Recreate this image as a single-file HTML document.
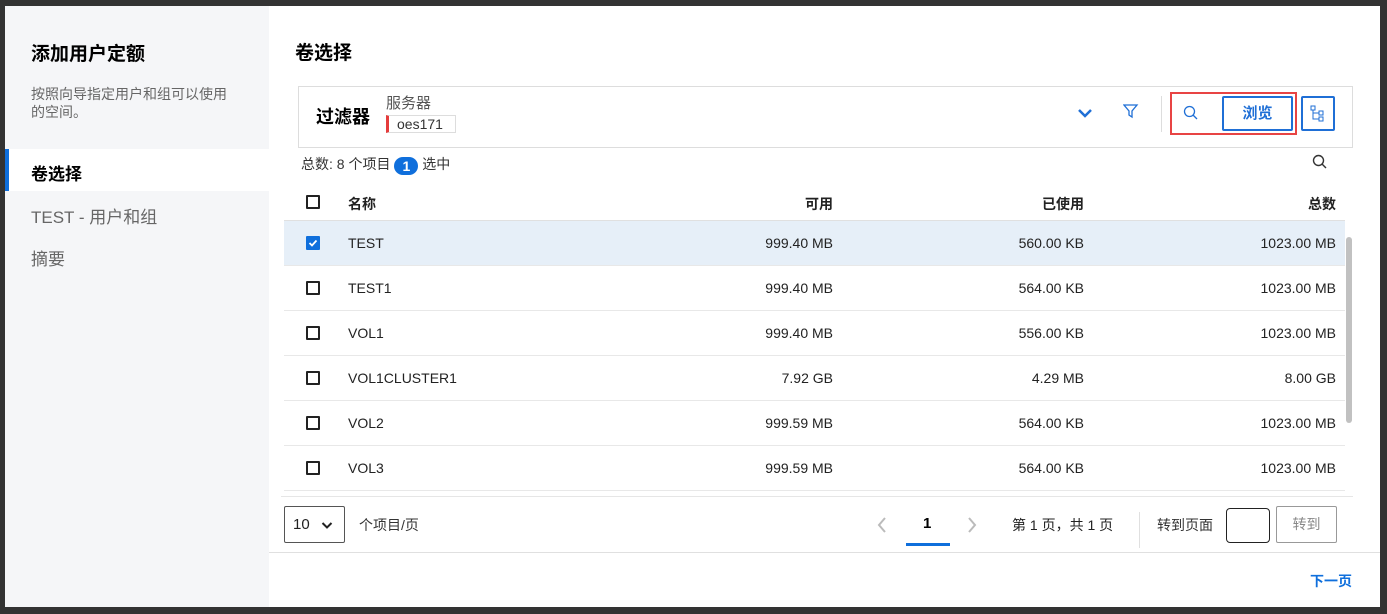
<!DOCTYPE html>
<html><head><meta charset="utf-8"><style>
*{box-sizing:border-box;margin:0;padding:0}
body{width:1387px;height:614px;background:#333;font-family:"Liberation Sans","Noto Sans CJK SC",sans-serif;position:relative;overflow:hidden;color:#222}
.modal{position:absolute;left:5px;top:6px;width:1375px;height:601px;background:#fff}
.left{position:absolute;left:0;top:0;width:264px;height:601px;background:#f5f6f8}
.a{position:absolute;white-space:nowrap}
.chk{position:absolute;width:14px;height:14px;border:2px solid #222;border-radius:1px}
.row{position:absolute;left:279px;width:1061px;height:45px;border-bottom:1px solid #e8e8e8;font-size:14px}
.row span{position:absolute;top:14px}
.r{text-align:right}
</style></head><body>
<div class="modal">
<div class="left">
 <div class="a" style="left:26px;top:33px;font-size:19px;font-weight:bold;color:#000">添加用户定额</div>
 <div class="a" style="left:26px;top:79px;font-size:14px;color:#666;line-height:18px;white-space:normal;width:205px">按照向导指定用户和组可以使用的空间。</div>
 <div class="a" style="left:0;top:143px;width:264px;height:42px;background:#fff;border-left:4px solid #0f6fdc"></div>
 <div class="a" style="left:26px;top:154px;font-size:17px;font-weight:bold;color:#000">卷选择</div>
 <div class="a" style="left:26px;top:197px;font-size:17px;color:#666">TEST - 用户和组</div>
 <div class="a" style="left:26px;top:239px;font-size:17px;color:#666">摘要</div>
</div>
<div class="a" style="left:290px;top:32px;font-size:19px;font-weight:bold;color:#000">卷选择</div>
<div class="a" style="left:293px;top:80px;width:1055px;height:62px;border:1px solid #ddd"></div>
<div class="a" style="left:311px;top:97px;font-size:18px;font-weight:bold;color:#000">过滤器</div>
<div class="a" style="left:381px;top:86px;font-size:15px;color:#555">服务器</div>
<div class="a" style="left:381px;top:109px;width:70px;height:18px;border:1px solid #ddd;border-left:3px solid #e53c3c;font-size:14px;color:#333;padding-left:8px;line-height:16px">oes171</div>
<svg class="a" style="left:1072px;top:101px" width="16" height="12"><path d="M2 3l6 6 6-6" stroke="#1f6fd6" stroke-width="2.5" fill="none"/></svg>
<svg class="a" style="left:1118px;top:97px" width="16" height="16"><path d="M1 2h13l-5 6v6l-3-2V8z" stroke="#1f6fd6" stroke-width="1.3" fill="none"/></svg>
<div class="a" style="left:1156px;top:90px;width:1px;height:36px;background:#ddd"></div>
<div class="a" style="left:1165px;top:86px;width:127px;height:43px;border:2px solid #e84444"></div>
<svg class="a" style="left:1178px;top:99px" width="16" height="16"><circle cx="6.5" cy="6.5" r="5" stroke="#1f6fd6" stroke-width="1.3" fill="none"/><path d="M10 10l4 4" stroke="#1f6fd6" stroke-width="1.3"/></svg>
<div class="a" style="left:1217px;top:90px;width:71px;height:35px;border:2px solid #1f6fd6;border-radius:2px;color:#1f6fd6;font-weight:bold;font-size:15px;text-align:center;line-height:31px">浏览</div>
<div class="a" style="left:1296px;top:90px;width:34px;height:35px;border:2px solid #1f6fd6;border-radius:2px"></div>
<svg class="a" style="left:1305px;top:99px" width="16" height="18"><rect x="1" y="1" width="4" height="4" stroke="#1f6fd6" fill="none"/><rect x="9" y="6" width="4" height="4" stroke="#1f6fd6" fill="none"/><rect x="9" y="12" width="4" height="4" stroke="#1f6fd6" fill="none"/><path d="M3 5v9h6M3 8h6" stroke="#1f6fd6" fill="none"/></svg>
<div class="a" style="left:296px;top:148px;font-size:14px;color:#333">总数: 8 个项目 <span style="display:inline-block;width:24px;height:18px;border-radius:9px;background:#0f6fdc;color:#fff;font-weight:bold;text-align:center;line-height:18px;vertical-align:-2px">1</span> 选中</div>
<svg class="a" style="left:1307px;top:148px" width="16" height="16"><circle cx="6.5" cy="6.5" r="5" stroke="#333" stroke-width="1.4" fill="none"/><path d="M10 10l4 4" stroke="#333" stroke-width="1.4"/></svg>
<div class="row" style="top:173px;height:42px;border-bottom:1px solid #e0e0e0;font-weight:bold;color:#222">
 <div class="chk" style="left:22px;top:16px"></div>
 <span style="left:64px;top:15px">名称</span><span class="r" style="right:512px;top:15px">可用</span><span class="r" style="right:261px;top:15px">已使用</span><span class="r" style="right:9px;top:15px">总数</span>
</div>
<div class="row" style="top:215px;background:#e6eff8"><div class="chk" style="left:22px;top:15px;background:#0f6fdc;border-color:#0f6fdc"><svg width="10" height="10" style="position:absolute;left:0;top:0"><path d="M1.5 5l2.5 2.5 4.5-5" stroke="#fff" stroke-width="1.8" fill="none"/></svg></div><span style="left:64px">TEST</span><span style="right:512px">999.40 MB</span><span style="right:261px">560.00 KB</span><span style="right:9px">1023.00 MB</span></div>
<div class="row" style="top:260px"><div class="chk" style="left:22px;top:15px"></div><span style="left:64px">TEST1</span><span style="right:512px">999.40 MB</span><span style="right:261px">564.00 KB</span><span style="right:9px">1023.00 MB</span></div>
<div class="row" style="top:305px"><div class="chk" style="left:22px;top:15px"></div><span style="left:64px">VOL1</span><span style="right:512px">999.40 MB</span><span style="right:261px">556.00 KB</span><span style="right:9px">1023.00 MB</span></div>
<div class="row" style="top:350px"><div class="chk" style="left:22px;top:15px"></div><span style="left:64px">VOL1CLUSTER1</span><span style="right:512px">7.92 GB</span><span style="right:261px">4.29 MB</span><span style="right:9px">8.00 GB</span></div>
<div class="row" style="top:395px"><div class="chk" style="left:22px;top:15px"></div><span style="left:64px">VOL2</span><span style="right:512px">999.59 MB</span><span style="right:261px">564.00 KB</span><span style="right:9px">1023.00 MB</span></div>
<div class="row" style="top:440px"><div class="chk" style="left:22px;top:15px"></div><span style="left:64px">VOL3</span><span style="right:512px">999.59 MB</span><span style="right:261px">564.00 KB</span><span style="right:9px">1023.00 MB</span></div>
<div class="a" style="left:1341px;top:231px;width:6px;height:186px;background:#c1c1c1;border-radius:3px"></div>
<div class="a" style="left:276px;top:490px;width:1072px;height:1px;background:#e6e6e6"></div>
<div class="a" style="left:279px;top:500px;width:61px;height:37px;border:1px solid #555;border-radius:2px;font-size:15px;padding:9px 0 0 8px">10</div>
<svg class="a" style="left:316px;top:515px" width="12" height="9"><path d="M1.5 2l4.5 4.5 4.5-4.5" stroke="#222" stroke-width="2" fill="none"/></svg>
<div class="a" style="left:354px;top:509px;font-size:14px;color:#333">个项目/页</div>
<svg class="a" style="left:872px;top:510px" width="10" height="18"><path d="M8 2l-6 7 6 7" stroke="#bbb" stroke-width="2" fill="none"/></svg>
<div class="a" style="left:918px;top:509px;font-size:15px;color:#000;font-weight:bold">1</div>
<div class="a" style="left:901px;top:537px;width:44px;height:3px;background:#0f6fdc"></div>
<svg class="a" style="left:962px;top:510px" width="10" height="18"><path d="M2 2l6 7-6 7" stroke="#bbb" stroke-width="2" fill="none"/></svg>
<div class="a" style="left:1007px;top:509px;font-size:14px;color:#222">第 1 页，共 1 页</div>
<div class="a" style="left:1134px;top:506px;width:1px;height:36px;background:#e0e0e0"></div>
<div class="a" style="left:1152px;top:509px;font-size:14px;color:#333">转到页面</div>
<div class="a" style="left:1221px;top:502px;width:44px;height:35px;border:1.5px solid #222;border-radius:4px"></div>
<div class="a" style="left:1271px;top:500px;width:61px;height:37px;border:1px solid #999;border-radius:2px;font-size:14px;color:#888;text-align:center;line-height:35px">转到</div>
<div class="a" style="left:264px;top:546px;width:1111px;height:1px;background:#e0e0e0"></div>
<div class="a" style="left:1305px;top:565px;font-size:14px;color:#0f6fdc;font-weight:bold">下一页</div>
</div>
</body></html>
